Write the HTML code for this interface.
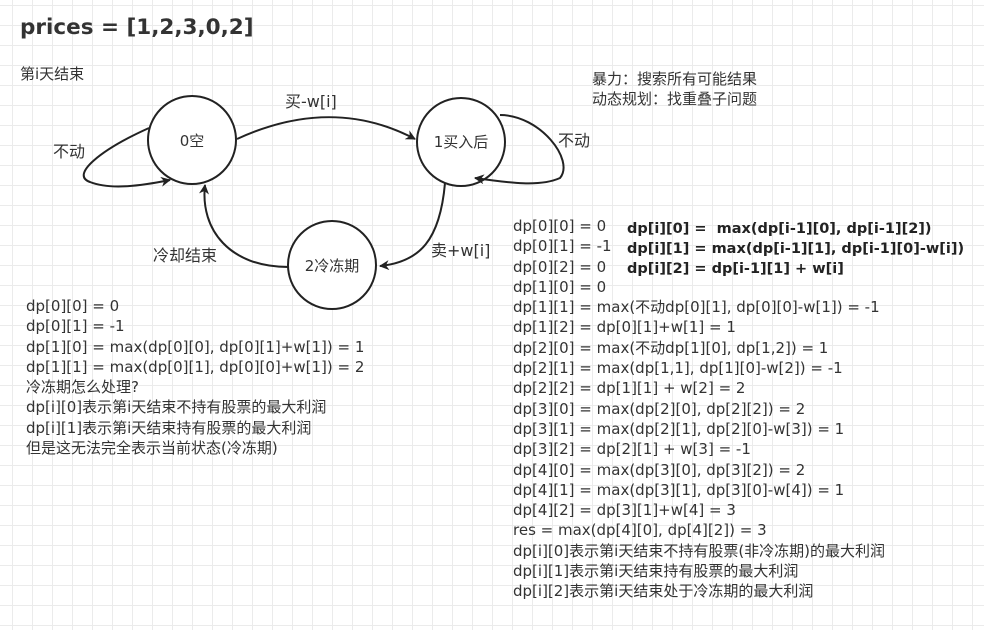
<!DOCTYPE html>
<html><head><meta charset="utf-8"><style>
html,body{margin:0;padding:0}
body{width:984px;height:630px;position:relative;overflow:hidden;background-color:#fff;
background-image:linear-gradient(to right,#ebebeb 1px,transparent 1px),linear-gradient(to bottom,#ebebeb 1px,transparent 1px);
background-size:20px 20px;background-position:12px 5px;
font-family:"DejaVu Sans","Noto Sans CJK SC",sans-serif;color:#333}
.t{position:absolute;white-space:nowrap}
.blk{position:absolute;font-size:15px;line-height:20.3px;white-space:pre;color:#333}
</style></head><body>
<div class="t" style="left:20px;top:15px;font-size:21.5px;font-weight:bold;">prices = [1,2,3,0,2]</div>
<div class="t" style="left:20px;top:63px;font-size:15px;">第i天结束</div>
<div class="t" style="left:592px;top:69px;font-size:15px;line-height:20px;">暴力：搜索所有可能结果<br>动态规划：找重叠子问题</div>
<svg width="984" height="630" style="position:absolute;left:0;top:0" xmlns="http://www.w3.org/2000/svg">
<defs><marker id="a" markerWidth="10" markerHeight="10" refX="9" refY="5" orient="auto" markerUnits="userSpaceOnUse"><path d="M0,0 L10,5 L0,10 L3,5 Z" fill="#222"/></marker></defs>
<g fill="none" stroke="#222" stroke-width="2">
<circle cx="192" cy="140" r="44" fill="#fff"/>
<circle cx="461" cy="142" r="44" fill="#fff"/>
<circle cx="332" cy="265" r="44" fill="#fff"/>
<path d="M237,139 C300,110 360,110 415,139" marker-end="url(#a)"/>
<path d="M149,128 C100,150 70,175 90,182 C110,190 140,186 170,180" marker-end="url(#a)"/>
<path d="M500,115 C540,115 575,160 560,178 C540,187 510,183 475,178" marker-end="url(#a)"/>
<path d="M445,183 C440,240 420,262 380,266" marker-end="url(#a)"/>
<path d="M288,267 C230,267 200,230 205,185" marker-end="url(#a)"/>
</g>
<g font-family="DejaVu Sans, Noto Sans CJK SC, sans-serif" fill="#333" font-size="15">
<text x="192" y="146" text-anchor="middle">0空</text>
<text x="461" y="147" text-anchor="middle">1买入后</text>
<text x="332" y="271" text-anchor="middle">2冷冻期</text>
<text x="285" y="107" font-size="16">买-w[i]</text>
<text x="53" y="157" font-size="16">不动</text>
<text x="558" y="146" font-size="16">不动</text>
<text x="431" y="256" font-size="16">卖+w[i]</text>
<text x="153" y="261" font-size="16">冷却结束</text>
</g>
</svg>
<div class="blk" style="left:26px;top:296px;">dp[0][0] = 0
dp[0][1] = -1
dp[1][0] = max(dp[0][0], dp[0][1]+w[1]) = 1
dp[1][1] = max(dp[0][1], dp[0][0]+w[1]) = 2
冷冻期怎么处理?
dp[i][0]表示第i天结束不持有股票的最大利润
dp[i][1]表示第i天结束持有股票的最大利润
但是这无法完全表示当前状态(冷冻期)</div>
<div class="blk" style="left:513px;top:216px;">dp[0][0] = 0
dp[0][1] = -1
dp[0][2] = 0
dp[1][0] = 0
dp[1][1] = max(不动dp[0][1], dp[0][0]-w[1]) = -1
dp[1][2] = dp[0][1]+w[1] = 1
dp[2][0] = max(不动dp[1][0], dp[1,2]) = 1
dp[2][1] = max(dp[1,1], dp[1][0]-w[2]) = -1
dp[2][2] = dp[1][1] + w[2] = 2
dp[3][0] = max(dp[2][0], dp[2][2]) = 2
dp[3][1] = max(dp[2][1], dp[2][0]-w[3]) = 1
dp[3][2] = dp[2][1] + w[3] = -1
dp[4][0] = max(dp[3][0], dp[3][2]) = 2
dp[4][1] = max(dp[3][1], dp[3][0]-w[4]) = 1
dp[4][2] = dp[3][1]+w[4] = 3
res = max(dp[4][0], dp[4][2]) = 3
dp[i][0]表示第i天结束不持有股票(非冷冻期)的最大利润
dp[i][1]表示第i天结束持有股票的最大利润
dp[i][2]表示第i天结束处于冷冻期的最大利润</div>
<div class="blk" style="left:627px;top:219px;font-weight:bold;font-size:14.5px;line-height:20px;color:#222">dp[i][0] =  max(dp[i-1][0], dp[i-1][2])
dp[i][1] = max(dp[i-1][1], dp[i-1][0]-w[i])
dp[i][2] = dp[i-1][1] + w[i]</div>
</body></html>
